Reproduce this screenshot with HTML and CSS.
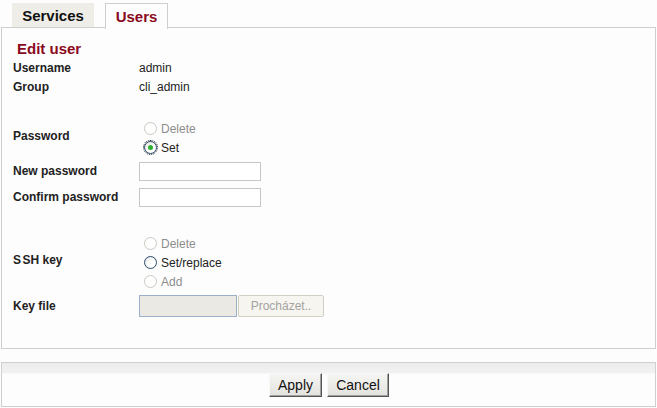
FILE: index.html
```html
<!DOCTYPE html>
<html>
<head>
<meta charset="utf-8">
<link rel="stylesheet" href="styles.css">
</head>
<body>
<div class="tabs">
  <div class="tab">Services</div>
  <div class="tab active">Users</div>
</div>
<div class="panel">
  <h2 class="title">Edit user</h2>
  <div class="row r19"><div class="lbl">Username</div><div class="val">admin</div></div>
  <div class="row r19"><div class="lbl">Group</div><div class="val">cli_admin</div></div>

  <div class="row block pw">
    <div class="lbl up">Password</div>
    <div class="val radios">
      <div class="opt dis"><span class="radio"></span>Delete</div>
      <div class="opt"><span class="radio checked focus"></span>Set</div>
    </div>
  </div>
  <div class="row r26"><div class="lbl">New password</div><div class="val"><span class="input"></span></div></div>
  <div class="row r26"><div class="lbl">Confirm password</div><div class="val"><span class="input"></span></div></div>

  <div class="row block ssh">
    <div class="lbl up"><span class="sp">S</span>SH key</div>
    <div class="val radios">
      <div class="opt dis"><span class="radio"></span>Delete</div>
      <div class="opt"><span class="radio dark"></span>Set/replace</div>
      <div class="opt dis"><span class="radio"></span>Add</div>
    </div>
  </div>
  <div class="row keyrow"><div class="lbl">Key file</div><div class="val file"><span class="fileinput"></span><span class="browse">Procházet..</span></div></div>
</div>
<div class="footer">
  <button class="btn apply">Apply</button>
  <button class="btn cancel">Cancel</button>
</div>
</body>
</html>
```
FILE: styles.css
```css
html, body { margin: 0; padding: 0; background: #fdfdfd; }
body { font-family: "Liberation Sans", Arial, sans-serif; font-size: 12px; color: #222; width: 657px; height: 408px; overflow: hidden; }

.tabs { display: flex; align-items: flex-end; padding-left: 12px; gap: 11px; height: 28px; }
.tab { font-weight: bold; font-size: 15px; color: #111; background: #efede8; height: 24px; line-height: 26px; box-sizing: border-box; width: 82px; text-align: center; margin-bottom: 1px; }
.tab.active { background: #fdfdfd; color: #8a0a1e; border: 1px solid #cfcfcf; border-bottom: none; height: 26px; line-height: 25px; width: 63px; margin-bottom: -1px; position: relative; z-index: 1; }

.panel { margin: -1px 1px 0 1px; border: 1px solid #cfcfcf; height: 322px; box-sizing: border-box; width: 655px; padding-left: 11px; }
.title { margin: 13px 0 0 4px; font-size: 15px; color: #8a0a1e; font-weight: bold; line-height: 16px; height: 16px; }

.row { display: flex; align-items: center; }
.lbl { width: 126px; font-weight: bold; }
.lbl.up { padding-bottom: 5px; }
.sp { margin-right: 1.5px; }
.val { color: #222; }
.r19 { height: 19px; }
.title + .r19 { margin-top: 1px; }
.r26 { height: 26px; }

.pw { margin-top: 23px; height: 38px; margin-bottom: 1px; }
.ssh { margin-top: 24px; height: 57px; }
.keyrow { height: 28px; margin-top: 1px; }

.radios { display: flex; flex-direction: column; }
.opt { display: flex; align-items: center; height: 19px; }
.opt.dis { color: #8d8d8d; }
.radio { width: 13px; height: 13px; box-sizing: border-box; border-radius: 50%; border: 1px solid #c9c9c2; background: #fff; margin: 0 4px 0 5px; position: relative; }
.radio.dark, .radio.checked { border-color: #2a4a6e; background: radial-gradient(circle at 65% 65%, #fff 0, #fff 35%, #dcdcd6 100%); }
.radio.checked::after { content: ""; position: absolute; left: 3px; top: 3px; width: 5px; height: 5px; border-radius: 50%; background: #2fb12f; }
.radio.focus { outline: 1px dotted #222; outline-offset: 0; }

.input { display: block; width: 122px; height: 19px; box-sizing: border-box; border: 1px solid #c6c6c6; background: #fff; }
.file { display: flex; align-items: center; }
.fileinput { display: block; width: 98px; height: 22px; box-sizing: border-box; border: 1px solid #9bb0c6; background: #ebe9e4; }
.browse { display: block; width: 86px; height: 22px; box-sizing: border-box; border: 1px solid #cfcfc4; border-radius: 2px; background: #f6f5ef; color: #a3a3a3; text-align: center; line-height: 20px; margin-left: 1px; }

.footer { margin: 13px 1px 0 1px; width: 655px; height: 45px; box-sizing: border-box; border: 1px solid #cfcfcf; background: linear-gradient(#ececec 0, #f2f2f2 10px, #fdfdfd 11px); display: flex; justify-content: center; align-items: flex-start; padding-top: 10px; padding-left: 1px; gap: 5px; }
.btn { font-family: "Liberation Sans", Arial, sans-serif; font-size: 14px; color: #111; height: 24px; padding: 0; background: linear-gradient(#f5f5f3, #e3e2dd); border: 1px solid; border-color: #f8f8f8 #555 #555 #f8f8f8; box-shadow: inset -1px -1px 0 #a0a0a0; }
.apply { width: 53px; }
.cancel { width: 62px; }
```
